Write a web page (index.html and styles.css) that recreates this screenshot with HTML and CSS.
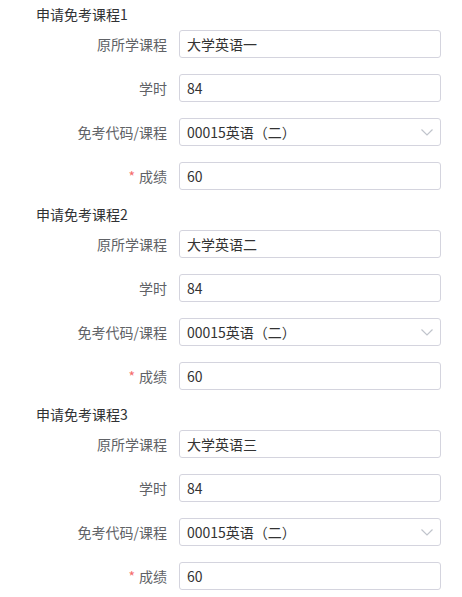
FILE: index.html
```html
<!DOCTYPE html>
<html lang="zh-CN">
<head>
<meta charset="utf-8">
<title>申请免考课程</title>
<link rel="stylesheet" href="styles.css">
</head>
<body>
<div class="page">
  <section class="course">
    <div class="course-title">申请免考课程1</div>
    <div class="row"><label class="label">原所学课程</label><div class="field">大学英语一</div></div>
    <div class="row"><label class="label">学时</label><div class="field">84</div></div>
    <div class="row"><label class="label">免考代码/课程</label><div class="field select"><span>00015英语（二）</span><svg class="arrow" width="12" height="7" viewBox="0 0 12 7"><path d="M0.5 0.5 L6 6 L11.5 0.5" fill="none" stroke="#c0c4cc" stroke-width="1.2"/></svg></div></div>
    <div class="row"><label class="label required">成绩</label><div class="field">60</div></div>
  </section>
  <section class="course">
    <div class="course-title">申请免考课程2</div>
    <div class="row"><label class="label">原所学课程</label><div class="field">大学英语二</div></div>
    <div class="row"><label class="label">学时</label><div class="field">84</div></div>
    <div class="row"><label class="label">免考代码/课程</label><div class="field select"><span>00015英语（二）</span><svg class="arrow" width="12" height="7" viewBox="0 0 12 7"><path d="M0.5 0.5 L6 6 L11.5 0.5" fill="none" stroke="#c0c4cc" stroke-width="1.2"/></svg></div></div>
    <div class="row"><label class="label required">成绩</label><div class="field">60</div></div>
  </section>
  <section class="course">
    <div class="course-title">申请免考课程3</div>
    <div class="row"><label class="label">原所学课程</label><div class="field">大学英语三</div></div>
    <div class="row"><label class="label">学时</label><div class="field">84</div></div>
    <div class="row"><label class="label">免考代码/课程</label><div class="field select"><span>00015英语（二）</span><svg class="arrow" width="12" height="7" viewBox="0 0 12 7"><path d="M0.5 0.5 L6 6 L11.5 0.5" fill="none" stroke="#c0c4cc" stroke-width="1.2"/></svg></div></div>
    <div class="row"><label class="label required">成绩</label><div class="field">60</div></div>
  </section>
</div>
</body>
</html>
```

FILE: styles.css
```css
html, body {
  margin: 0;
  padding: 0;
  background: #ffffff;
}
body {
  font-family: "Noto Sans CJK SC", "Noto Sans", sans-serif;
  font-size: 14px;
}
.page {
  padding: 4px 0 0 36px;
  display: flex;
  flex-direction: column;
  gap: 14px;
}
.course {
  display: flex;
  flex-direction: column;
}
.course-title {
  color: #303133;
  line-height: 20px;
  height: 20px;
  margin-bottom: 6px;
}
.row {
  display: grid;
  grid-template-columns: 131px 262px;
  column-gap: 12px;
  align-items: center;
  height: 28px;
  margin-bottom: 16px;
}
.row:last-child {
  margin-bottom: 0;
}
.label {
  text-align: right;
  color: #606266;
  line-height: 28px;
}
.label.required::before {
  content: "*";
  color: #f56c6c;
  margin-right: 4px;
}
.field {
  box-sizing: border-box;
  height: 28px;
  border: 1px solid #d4d4de;
  border-radius: 3px;
  padding: 0 7px 0 7px;
  color: #333333;
  line-height: 26px;
  display: flex;
  align-items: center;
  justify-content: space-between;
}
.arrow {
  flex: none;
}
```
